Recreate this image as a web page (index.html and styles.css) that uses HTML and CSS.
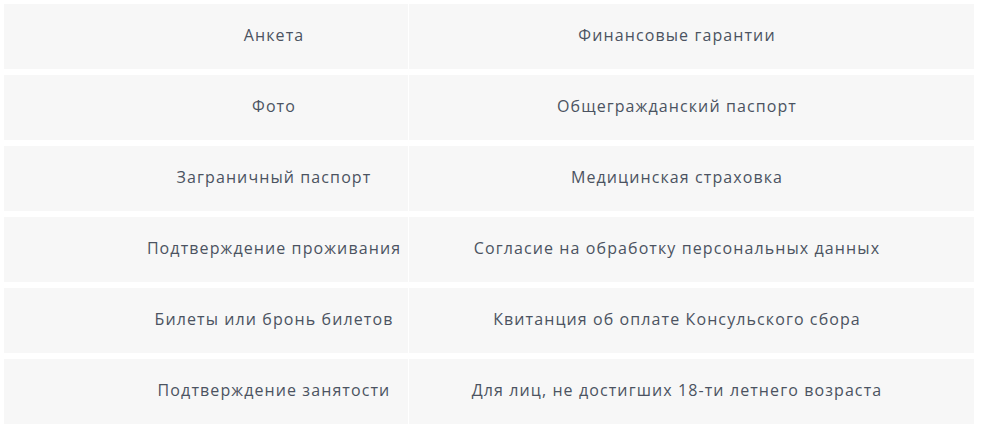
FILE: index.html
```html
<!DOCTYPE html>
<html lang="ru">
<head>
<meta charset="utf-8">
<title>Документы</title>
<link rel="stylesheet" href="styles.css">
</head>
<body>
<div class="docs">
  <div class="col col-left">
    <div class="cell">Анкета</div>
    <div class="cell">Фото</div>
    <div class="cell">Заграничный паспорт</div>
    <div class="cell">Подтверждение проживания</div>
    <div class="cell">Билеты или бронь билетов</div>
    <div class="cell">Подтверждение занятости</div>
  </div>
  <div class="col col-right">
    <div class="cell">Финансовые гарантии</div>
    <div class="cell">Общегражданский паспорт</div>
    <div class="cell">Медицинская страховка</div>
    <div class="cell">Согласие на обработку персональных данных</div>
    <div class="cell">Квитанция об оплате Консульского сбора</div>
    <div class="cell">Для лиц, не достигших 18-ти летнего возраста</div>
  </div>
</div>
</body>
</html>
```
FILE: styles.css
```css
html, body {
  margin: 0;
  padding: 0;
  background: #ffffff;
}
body {
  padding: 4px 0 0 4px;
  font-family: "Open Sans", "Noto Sans", sans-serif;
  font-size: 16px;
  letter-spacing: 1.1px;
  color: #4b5361;
}
.docs {
  display: flex;
  gap: 1px;
}
.col {
  display: flex;
  flex-direction: column;
  gap: 6px;
}
.col-left { width: 404px; }
.col-right { width: 565px; }
.cell {
  height: 65px;
  box-sizing: border-box;
  padding-bottom: 3px;
  background: #f7f7f7;
  display: flex;
  align-items: center;
  justify-content: center;
  white-space: nowrap;
}
.col-left .cell { padding-left: 136px; }
.col-right .cell { padding-right: 29px; }
```
